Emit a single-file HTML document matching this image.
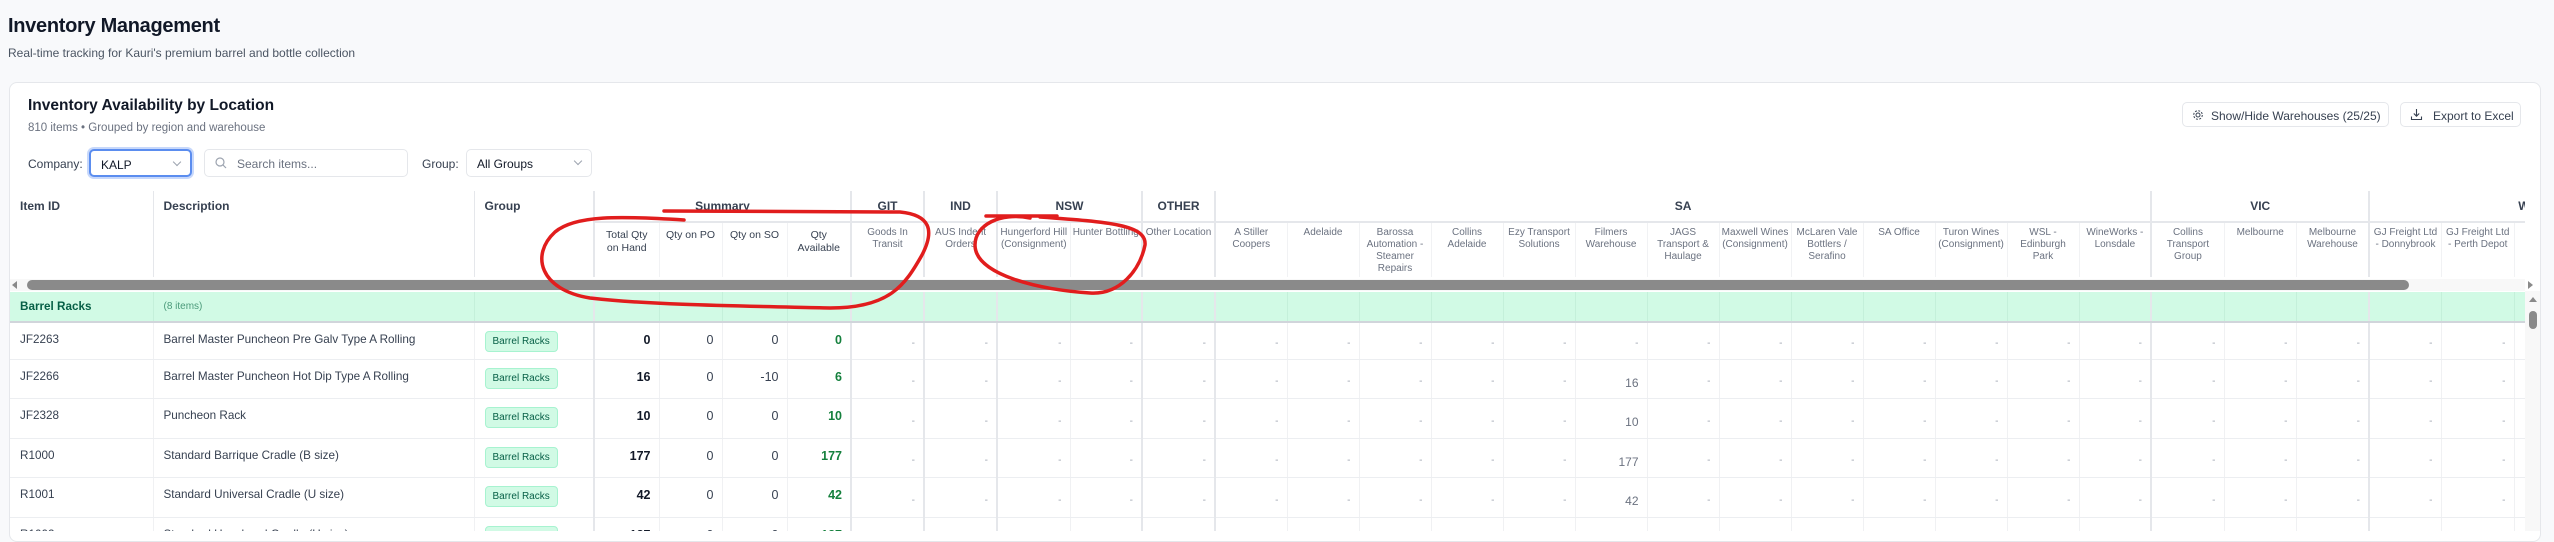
<!DOCTYPE html>
<html><head><meta charset="utf-8">
<style>
*{box-sizing:border-box;margin:0;padding:0}
body{width:2554px;height:529px;overflow:hidden;background:#f8f9fb;font-family:"Liberation Sans",Arial,sans-serif;color:#111827;position:relative}
.abs{position:absolute}
h1{position:absolute;left:8px;top:15px;font-size:20px;font-weight:600;color:#111827;letter-spacing:-0.3px}
.sub{left:8px;top:46px;font-size:12px;color:#4b5563}
.card{left:9px;top:82px;width:2532px;height:460px;background:#fff;border:1px solid #e5e7eb;border-radius:8px}
.ct{left:28px;top:97px;font-size:15.5px;font-weight:600;color:#111827}
.cs{left:28px;top:122px;font-size:11.5px;color:#6b7280}
.lbl{font-size:12px;color:#374151;top:157px}
.box{top:149px;height:28px;border:1px solid #e5e7eb;border-radius:5px;background:#fff;font-size:12px;color:#111827;padding:7px 0 0 10px}
.chev{position:absolute;right:10px;top:8px;width:6px;height:6px;border-right:1px solid #9ca3af;border-bottom:1px solid #9ca3af;transform:rotate(45deg)}
.btn{top:102px;height:25px;border:1px solid #e5e7eb;border-radius:5px;background:#fff;font-size:12px;color:#374151;padding:6px 0 0 0}
.wrap{left:10px;top:191px;width:2515px;height:340px;overflow:hidden}
table{border-collapse:collapse;table-layout:fixed;width:2639px}
th{font-weight:600;font-size:12px;color:#374151;border-right:1px solid #e5e7eb;vertical-align:top;text-align:center}
.hl{text-align:left;padding:8px 10px;border-right:1px solid #e5e7eb}
.r1 th{height:31px;padding-top:8px;border-bottom:2px solid #e5e7eb}
.r1 th.hl{border-bottom:none}
.r2 th{height:55px;font-weight:400;font-size:10px;color:#6b7280;line-height:12px;padding:4px 2px 0;border-right:1px solid #f1f2f4}
.r2 th.s{font-size:10.5px;color:#374151;line-height:13px;padding:6px 3px 0;white-space:nowrap}
.r2 th.gb{border-right:2px solid #e5e7eb}
.gbr{border-right:2px solid #e5e7eb!important}
td{border-right:1px solid #f0f1f3;border-bottom:1px solid #eceef1;font-size:11.7px;color:#374151;vertical-align:top;padding:10px 10px 0}
td.n{text-align:right;padding:10px 8px 0 0;font-size:12.5px}
td.b{color:#111827;font-weight:600}
td.g{color:#15803d;font-weight:600}
td.d{text-align:right;vertical-align:middle;color:#9ca3af;font-size:10px;padding:6px 8px 0 0}
td.v{text-align:right;vertical-align:middle;color:#6b7280;font-size:12px;padding:8px 8px 0 0}
tr.grp td{background:#d1fae5;height:30px;border-bottom:2px solid #d1d5db;vertical-align:middle;padding:0 10px;border-right:1px solid #c4f0da}
.badge{display:inline-block;background:#d1fae5;border:1px solid #a7f3d0;border-radius:4px;color:#065f46;font-size:10px;padding:4px 7px;margin-top:-2px}
.hsb{position:absolute;left:10px;top:279px;width:2515px;height:12px;background:#f8f8f8}
</style></head><body>
<h1>Inventory Management</h1>
<div class="abs sub">Real-time tracking for Kauri's premium barrel and bottle collection</div>
<div class="abs card"></div>
<div class="abs ct">Inventory Availability by Location</div>
<div class="abs cs">810 items • Grouped by region and warehouse</div>
<div class="abs lbl" style="left:28px">Company:</div>
<div class="abs box" style="left:89px;width:103px;border:2px solid #5b8def;box-shadow:0 0 0 2px #c7d8fb">KALP<span class="chev"></span></div>
<div class="abs box" style="left:204px;width:204px;color:#6b7280;padding-left:32px">
<svg class="abs" style="left:10px;top:7px" width="12" height="12" viewBox="0 0 12 12"><circle cx="5" cy="5" r="4" fill="none" stroke="#9ca3af" stroke-width="1.2"/><path d="M8 8l3 3" stroke="#9ca3af" stroke-width="1.2"/></svg>Search items...</div>
<div class="abs lbl" style="left:422px">Group:</div>
<div class="abs box" style="left:466px;width:126px">All Groups<span class="chev"></span></div>
<div class="abs btn" style="left:2182px;width:207px;padding-left:28px">
<svg class="abs" style="left:9px;top:6px" width="12" height="12" viewBox="0 0 12 12"><circle cx="6" cy="6" r="2" fill="none" stroke="#374151"/><circle cx="6" cy="6" r="4.3" fill="none" stroke="#374151" stroke-dasharray="2 1.4"/></svg>Show/Hide Warehouses (25/25)</div>
<div class="abs btn" style="left:2400px;width:121px;padding-left:32px">
<svg class="abs" style="left:9px;top:5px" width="13" height="13" viewBox="0 0 13 13"><path d="M6.5 1v7M3.8 5.5l2.7 2.7 2.7-2.7M1.5 8.5v3h10v-3" fill="none" stroke="#374151" stroke-width="1.1"/></svg>Export to Excel</div>

<div class="abs wrap">
<table>
<colgroup><col style="width:143px"><col style="width:321px"><col style="width:120px"><col style="width:65px"><col style="width:63px"><col style="width:65px"><col style="width:64px">
<col style="width:73px"><col style="width:73px"><col style="width:73px"><col style="width:72px"><col style="width:73px">
<col style="width:72px"><col style="width:72px"><col style="width:72px"><col style="width:72px"><col style="width:72px"><col style="width:72px"><col style="width:72px"><col style="width:72px"><col style="width:72px"><col style="width:72px"><col style="width:72px"><col style="width:72px"><col style="width:72px">
<col style="width:73px"><col style="width:72px"><col style="width:73px"><col style="width:72px"><col style="width:73px"><col style="width:72px"><col style="width:72px"></colgroup>
<tr class="r1"><th class="hl" rowspan="2">Item ID</th><th class="hl" rowspan="2">Description</th><th class="hl gbr" rowspan="2">Group</th>
<th colspan="4" class="gbr">Summary</th><th class="gbr">GIT</th><th class="gbr">IND</th><th colspan="2" class="gbr">NSW</th><th class="gbr">OTHER</th><th colspan="13" class="gbr">SA</th><th colspan="3" class="gbr">VIC</th><th colspan="4" style="text-align:left;padding-left:148px">WA</th></tr>
<tr class="r2"><th class="s">Total Qty<br>on Hand</th><th class="s">Qty on PO</th><th class="s">Qty on SO</th><th class="s gb">Qty<br>Available</th>
<th class="gb">Goods In Transit</th><th class="gb">AUS Indent Orders</th><th style="white-space:nowrap">Hungerford Hill<br>(Consignment)</th><th class="gb" style="white-space:nowrap">Hunter Bottling</th><th class="gb">Other Location</th>
<th>A Stiller Coopers</th><th>Adelaide</th><th>Barossa Automation - Steamer Repairs</th><th>Collins Adelaide</th><th>Ezy Transport Solutions</th><th>Filmers Warehouse</th><th>JAGS Transport &amp; Haulage</th><th>Maxwell Wines (Consignment)</th><th>McLaren Vale Bottlers / Serafino</th><th>SA Office</th><th>Turon Wines (Consignment)</th><th>WSL - Edinburgh Park</th><th class="gb">WineWorks - Lonsdale</th>
<th>Collins Transport Group</th><th>Melbourne</th><th class="gb">Melbourne Warehouse</th><th>GJ Freight Ltd - Donnybrook</th><th>GJ Freight Ltd - Perth Depot</th><th>Kalp WA</th><th></th></tr>
<tr><td colspan="32" style="height:15px;padding:0;border:none"></td></tr>
<tr class="grp"><td style="color:#065f46;font-weight:700">Barrel Racks</td><td style="font-size:10px;color:#4b9a7a">(8 items)</td><td class="gbr"></td><td></td><td></td><td></td><td class="gbr"></td><td class="gbr"></td><td class="gbr"></td><td></td><td class="gbr"></td><td class="gbr"></td><td></td><td></td><td></td><td></td><td></td><td></td><td></td><td></td><td></td><td></td><td></td><td></td><td class="gbr"></td><td></td><td></td><td class="gbr"></td><td></td><td></td><td></td><td></td></tr>
</table>
<table id="body"></table>
</div>
<div class="hsb"><div class="abs" style="left:2px;top:2px;width:0;height:0;border-top:4px solid transparent;border-bottom:4px solid transparent;border-right:5px solid #8a8a8a"></div><div class="abs" style="left:17px;top:1px;width:2382px;height:10px;border-radius:5px;background:#8a8a8a"></div><div class="abs" style="left:2518px;top:2px;width:0;height:0;border-top:4px solid transparent;border-bottom:4px solid transparent;border-left:5px solid #8a8a8a"></div></div>
<div class="abs" style="left:2525px;top:291px;width:15px;height:240px;background:#f8f8f8"><div class="abs" style="left:4px;top:6px;width:0;height:0;border-left:4px solid transparent;border-right:4px solid transparent;border-bottom:5px solid #8a8a8a"></div><div class="abs" style="left:4px;top:20px;width:8px;height:18px;border-radius:4px;background:#8a8a8a"></div></div>

<svg class="abs" style="left:0;top:0" width="2554" height="529">
<g fill="none" stroke="#e11d1d" stroke-width="3.5" stroke-linecap="round">
<path d="M684 220 C620 216,575 215,555 232 C530 255,540 290,590 298 C650 305,740 306,830 308 C890 308,905 285,922 255 C935 230,930 215,900 212 L664 211"/>
<path d="M986 216 L1057 216 M1030 218 C1000 212,975 225,975 245 C975 275,1040 290,1090 293 C1120 295,1140 270,1145 245 C1147 225,1110 222,1040 217"/>
</g></svg>

<script>
var rows=[["JF2263","Barrel Master Puncheon Pre Galv Type A Rolling",0,0,0,0,"-",36],
["JF2266","Barrel Master Puncheon Hot Dip Type A Rolling",16,0,-10,6,16,39],
["JF2328","Puncheon Rack",10,0,0,10,10,40],
["R1000","Standard Barrique Cradle (B size)",177,0,0,177,177,39],
["R1001","Standard Universal Cradle (U size)",42,0,0,42,42,40],
["R1002","Standard Hogshead Cradle (H size)",127,0,0,127,127,40]];
var gb={0:1,1:1,3:1,4:1,17:1,20:1};
var h='<colgroup><col style="width:143px"><col style="width:321px"><col style="width:120px"><col style="width:65px"><col style="width:63px"><col style="width:65px"><col style="width:64px">';
var w=[73,73,73,72,73,72,72,72,72,72,72,72,72,72,72,72,72,72,73,72,73,72,73,72,72];
w.forEach(function(x){h+='<col style="width:'+x+'px">'});h+='</colgroup>';
rows.forEach(function(r){h+='<tr style="height:'+r[7]+'px"><td>'+r[0]+'</td><td>'+r[1]+'</td><td class="gbr"><span class="badge">Barrel Racks</span></td><td class="n b">'+r[2]+'</td><td class="n">'+r[3]+'</td><td class="n">'+r[4]+'</td><td class="n g gbr">'+r[5]+'</td>';
for(var i=0;i<25;i++){var c=(gb[i]?' gbr':'');if(i==10&&r[6]!=="-")h+='<td class="v'+c+'">'+r[6]+'</td>';else h+='<td class="d'+c+'">-</td>';}
h+='</tr>';});
document.getElementById('body').innerHTML=h;
</script>
</body></html>
